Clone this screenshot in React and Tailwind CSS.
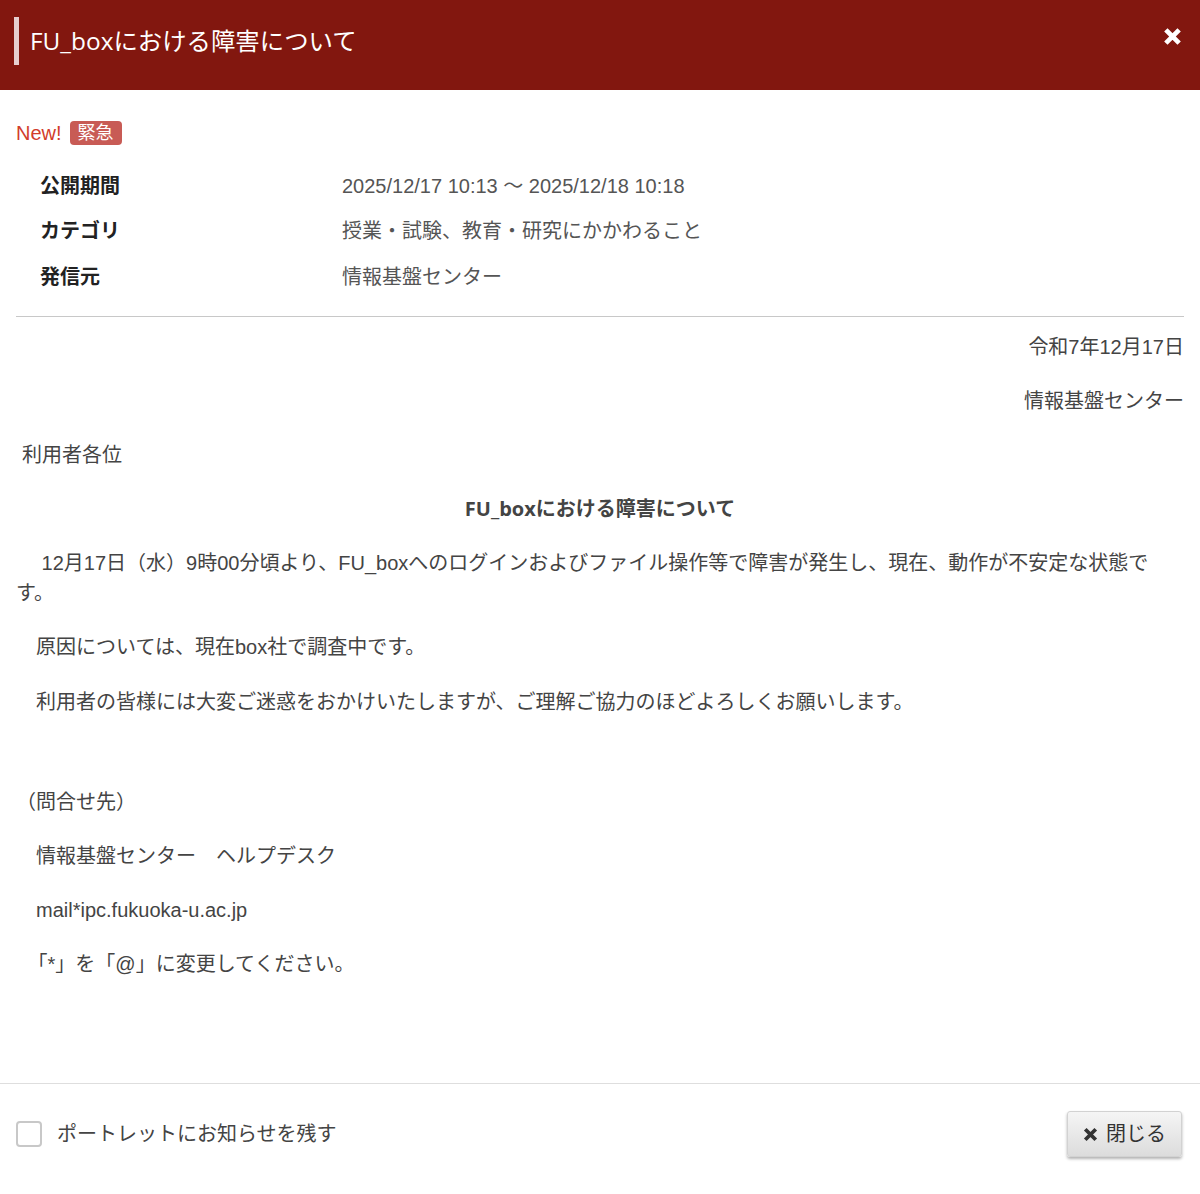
import React from 'react';

const meta = [
  { label: '公開期間', value: '2025/12/17 10:13 〜 2025/12/18 10:18' },
  { label: 'カテゴリ', value: '授業・試験、教育・研究にかかわること' },
  { label: '発信元', value: '情報基盤センター' },
];

const CloseIcon = ({ className }) => (
  <svg viewBox="0 0 20 20" className={className} fill="none" stroke="currentColor">
    <path d="M3 3L17 17M17 3L3 17" strokeWidth="5" strokeLinecap="butt" />
  </svg>
);

export default function App() {
  return (
    <div className="h-[1194px] flex flex-col bg-white text-[20px] text-[#444] [font-family:'Liberation_Sans','Noto_Sans_CJK_JP',sans-serif]">
      {/* Header */}
      <header className="h-[90px] shrink-0 bg-[#82170f] flex justify-between items-start">
        <div className="ml-[14px] mt-[17px] h-[48px] border-l-[5px] border-[#e6cfcf] pl-[11px] flex items-center">
          <h1 className="text-[24.4px] text-white [font-family:'Open_Sans','Noto_Sans_CJK_JP',sans-serif]">
            FU_boxにおける障害について
          </h1>
        </div>
        <button className="mt-[27px] mr-[18px] text-white" aria-label="閉じる">
          <CloseIcon className="w-[19px] h-[19px]" />
        </button>
      </header>

      {/* Body */}
      <main className="flex-1 overflow-hidden px-4 flex flex-col">
        <div className="mt-[28px] h-[30px] flex items-center gap-2">
          <span className="text-[#d23c2b]">New!</span>
          <span className="h-[24px] px-2 rounded-[4px] bg-[#c85b55] text-white text-[18px] leading-[24px]">緊急</span>
        </div>

        <div className="mt-[15px] flex flex-col">
          {meta.map((row) => (
            <div key={row.label} className="h-[45.5px] flex items-center">
              <div className="w-[326px] pl-6 font-bold text-[#222]">{row.label}</div>
              <div className="text-[#555]">{row.value}</div>
            </div>
          ))}
        </div>

        <div className="mt-[16px] border-t border-[#c8c8c8]" />

        <div className="mt-[15px] flex flex-col leading-[30px]">
          <p className="text-right mb-[24.2px]">令和7年12月17日</p>
          <p className="text-right mb-[24.2px]">情報基盤センター</p>
          <p className="pl-[6px] mb-[24.2px]">利用者各位</p>
          <p className="text-center font-bold mb-[24.2px] [font-family:'Open_Sans','Noto_Sans_CJK_JP',sans-serif]">
            FU_boxにおける障害について
          </p>
          <p className="mb-[24.2px]">
            {'\u00a0\u3000'}12月17日（水）9時00分頃より、FU_boxへのログインおよびファイル操作等で障害が発生し、現在、動作が不安定な状態です。
          </p>
          <p className="mb-[24.2px]">{'\u3000'}原因については、現在box社で調査中です。</p>
          <p className="mb-[24.2px]">{'\u3000'}利用者の皆様には大変ご迷惑をおかけいたしますが、ご理解ご協力のほどよろしくお願いします。</p>
          <p className="mt-[46px] mb-[24.2px]">（問合せ先）</p>
          <p className="mb-[24.2px]">{'\u3000'}情報基盤センター{'\u3000'}ヘルプデスク</p>
          <p className="mb-[24.2px]">{'\u3000'}mail*ipc.fukuoka-u.ac.jp</p>
          <p className="pl-[6px] mb-[24.2px]">{'\u00a0'}「*」を「@」に変更してください。</p>
        </div>
      </main>

      {/* Footer */}
      <footer className="h-[111px] shrink-0 border-t border-[#dedede] px-4 pt-[27px] pb-[37px] flex items-center justify-between">
        <label className="flex items-center gap-[15px] text-[#444]">
          <input
            type="checkbox"
            className="appearance-none w-[26px] h-[26px] border-2 border-[#c8c8c8] rounded-[4px] bg-white"
          />
          <span>ポートレットにお知らせを残す</span>
        </label>
        <button className="h-[46px] w-[115px] mr-[2px] flex items-center justify-center gap-[8px] rounded-[3px] border border-[#d2d2d2] bg-gradient-to-b from-[#f5f5f5] to-[#dcdcdc] shadow-[0_2px_3px_rgba(0,0,0,0.3)] text-[#333]">
          <CloseIcon className="w-[15px] h-[15px]" />
          <span>閉じる</span>
        </button>
      </footer>
    </div>
  );
}
